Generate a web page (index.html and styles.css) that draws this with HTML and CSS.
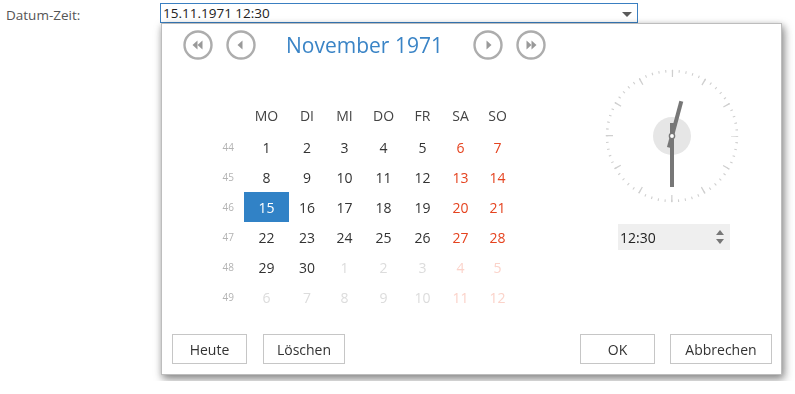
FILE: index.html
```html
<!DOCTYPE html>
<html lang="de">
<head>
    <meta charset="UTF-8">
    <meta name="viewport" content="width=device-width, initial-scale=1.0">
    <title>Datum-Zeit</title>
    <link rel="stylesheet" href="styles.css">
</head>
<body>
    <div class="form-row">
        <label class="form-label">Datum-Zeit:</label>
        <div class="picker">
            <div class="picker-input">
                <span>15.11.1971 12:30</span>
                <span class="dropdown-arrow"></span>
            </div>

            <div class="popup-wrap">
            <div class="popup">
                <div class="nav">
                    <button class="nav-btn" title="Voriges Jahr">
                        <svg width="30" height="30" viewBox="0 0 30 30">
                            <circle cx="15" cy="15" r="13.5" fill="none" stroke="#adadad" stroke-width="2.4"/>
                            <polygon points="14.5,10.5 9.5,15 14.5,19.5" fill="#999"/>
                            <polygon points="19.5,10.5 14.5,15 19.5,19.5" fill="#999"/>
                        </svg>
                    </button>
                    <button class="nav-btn" title="Voriger Monat">
                        <svg width="30" height="30" viewBox="0 0 30 30">
                            <circle cx="15" cy="15" r="13.5" fill="none" stroke="#adadad" stroke-width="2.4"/>
                            <polygon points="16.5,10.5 11.5,15 16.5,19.5" fill="#999"/>
                        </svg>
                    </button>
                    <div class="nav-title">November 1971</div>
                    <button class="nav-btn" title="Nächster Monat">
                        <svg width="30" height="30" viewBox="0 0 30 30">
                            <circle cx="15" cy="15" r="13.5" fill="none" stroke="#adadad" stroke-width="2.4"/>
                            <polygon points="13.5,10.5 18.5,15 13.5,19.5" fill="#999"/>
                        </svg>
                    </button>
                    <button class="nav-btn" title="Nächstes Jahr">
                        <svg width="30" height="30" viewBox="0 0 30 30">
                            <circle cx="15" cy="15" r="13.5" fill="none" stroke="#adadad" stroke-width="2.4"/>
                            <polygon points="10.5,10.5 15.5,15 10.5,19.5" fill="#999"/>
                            <polygon points="15.5,10.5 20.5,15 15.5,19.5" fill="#999"/>
                        </svg>
                    </button>
                </div>

                <div class="main">
                    <div class="calendar">
                        <div class="cal-head">
                            <span></span>
                            <span>MO</span><span>DI</span><span>MI</span><span>DO</span><span>FR</span><span>SA</span><span>SO</span>
                        </div>
                        <div class="cal-body">
                            <span class="wk">44</span>
                            <span>1</span><span>2</span><span>3</span><span>4</span><span>5</span><span class="we">6</span><span class="we">7</span>
                            <span class="wk">45</span>
                            <span>8</span><span>9</span><span>10</span><span>11</span><span>12</span><span class="we">13</span><span class="we">14</span>
                            <span class="wk">46</span>
                            <span class="sel">15</span><span>16</span><span>17</span><span>18</span><span>19</span><span class="we">20</span><span class="we">21</span>
                            <span class="wk">47</span>
                            <span>22</span><span>23</span><span>24</span><span>25</span><span>26</span><span class="we">27</span><span class="we">28</span>
                            <span class="wk">48</span>
                            <span>29</span><span>30</span><span class="out">1</span><span class="out">2</span><span class="out">3</span><span class="out we">4</span><span class="out we">5</span>
                            <span class="wk">49</span>
                            <span class="out">6</span><span class="out">7</span><span class="out">8</span><span class="out">9</span><span class="out">10</span><span class="out we">11</span><span class="out we">12</span>
                        </div>
                    </div>

                    <div class="time-side">
                        <svg class="clock" width="140" height="140" viewBox="0 0 140 140">
                            <!-- Minutenstriche und Stundenstriche -->
                            <circle cx="70" cy="70" r="65" fill="none" stroke="#cfcfcf" stroke-width="2.6"
                                    stroke-dasharray="1.1 5.7068" stroke-dashoffset="0.55"/>
                            <circle cx="70" cy="70" r="62.5" fill="none" stroke="#cfcfcf" stroke-width="7"
                                    stroke-dasharray="1.3 31.425" stroke-dashoffset="0.65"/>
                            <circle cx="70" cy="70" r="19" fill="#e6e6e6"/>
                            <line x1="66.9" y1="81.6" x2="79.3" y2="35.2" stroke="#777" stroke-width="4"/>
                            <line x1="70" y1="57" x2="70" y2="121" stroke="#777" stroke-width="4"/>
                            <circle cx="70" cy="70" r="2.6" fill="#fff" stroke="#777" stroke-width="1.4"/>
                        </svg>
                        <div class="time-input">
                            <span>12:30</span>
                            <span class="spinner">
                                <span class="spin-up"></span>
                                <span class="spin-down"></span>
                            </span>
                        </div>
                    </div>
                </div>

                <div class="footer">
                    <button class="btn btn-heute">Heute</button>
                    <button class="btn btn-loeschen">Löschen</button>
                    <span class="spacer"></span>
                    <button class="btn btn-ok">OK</button>
                    <button class="btn btn-abbrechen">Abbrechen</button>
                </div>
            </div>
            </div>
        </div>
    </div>
</body>
</html>
```

FILE: styles.css
```css
body {
    font-family: "Open Sans", "Noto Sans", sans-serif;
    margin: 0;
    padding: 0;
    background-color: #fff;
    color: #333;
}
.form-row {
    display: flex;
    align-items: flex-start;
}
.form-label {
    width: 154px;
    padding-left: 6px;
    padding-top: 6px;
    font-size: 13.5px;
    color: #555;
}
.picker {
    display: flex;
    flex-direction: column;
    margin-top: 3px;
}
.picker-input {
    display: flex;
    align-items: center;
    justify-content: space-between;
    box-sizing: border-box;
    width: 478px;
    height: 20px;
    padding: 0 5px 0 2px;
    border: 1px solid #3a7fc1;
    font-size: 13.5px;
    color: #222;
}
.dropdown-arrow {
    width: 0;
    height: 0;
    margin-top: 2px;
    border-left: 5px solid transparent;
    border-right: 5px solid transparent;
    border-top: 5px solid #5a5a5a;
}

/* Popup, mit Platz fuer den Schatten */
.popup-wrap {
    margin-left: 1px;
    width: 625px;
    padding: 0 4px 6px 0;
}
.popup {
    box-sizing: border-box;
    width: 621px;
    height: 352px;
    display: flex;
    flex-direction: column;
    background-color: #fff;
    border: 1px solid #bdbdbd;
    box-shadow: 2px 4px 9px rgba(0, 0, 0, 0.35);
    filter: drop-shadow(1px 2px 3px rgba(0, 0, 0, 0.22));
}
.nav {
    display: flex;
    align-items: center;
    height: 30px;
    margin-top: 6px;
    padding-left: 21px;
}
.nav-btn {
    width: 30px;
    height: 30px;
    padding: 0;
    border: none;
    background: none;
}
.nav-btn svg {
    display: block;
}
.nav-btn + .nav-btn {
    margin-left: 13px;
}
.nav-title {
    width: 217px;
    text-align: center;
    font-size: 21px;
    color: #3a84c6;
}
.main {
    display: flex;
    margin-top: 6px;
}
.calendar {
    margin-left: 42px;
    padding-top: 34px;
}
.cal-head,
.cal-body {
    display: grid;
    grid-template-columns: 40px 45px 36px 39px 39px 39px 37px 37px;
    grid-auto-rows: 30px;
}
.cal-head {
    margin-bottom: 2px;
}
.cal-head span,
.cal-body span {
    display: flex;
    align-items: center;
    justify-content: center;
    font-size: 14px;
    color: #333;
}
.cal-head span {
    color: #444;
}
.cal-body .wk {
    justify-content: flex-end;
    padding-right: 10px;
    font-size: 10px;
    color: #b3b3b3;
}
.cal-body .we {
    color: #e5431f;
}
.cal-body .out {
    color: #dcdcdc;
}
.cal-body .out.we {
    color: #fbd3ca;
}
.cal-body .sel {
    background-color: #3182c6;
    color: #fff;
}
.time-side {
    margin-left: 86px;
    display: flex;
    flex-direction: column;
}
.clock {
    display: block;
}
.time-input {
    display: flex;
    align-items: center;
    justify-content: space-between;
    box-sizing: border-box;
    width: 112px;
    height: 26px;
    margin-top: 18px;
    margin-left: 16px;
    padding: 0 6px 0 2px;
    background-color: #efefef;
    font-size: 14px;
    color: #222;
}
.spinner {
    display: flex;
    flex-direction: column;
    gap: 4px;
}
.spin-up,
.spin-down {
    width: 0;
    height: 0;
    border-left: 4px solid transparent;
    border-right: 4px solid transparent;
}
.spin-up {
    border-bottom: 5px solid #777;
}
.spin-down {
    border-top: 5px solid #777;
}
.footer {
    display: flex;
    margin-top: auto;
    padding: 0 9px 10px 10px;
}
.spacer {
    flex: 1;
}
.btn {
    height: 30px;
    padding: 0;
    background-color: #fff;
    border: 1px solid #c6c6c6;
    font-family: "Open Sans", "Noto Sans", sans-serif;
    font-size: 14px;
    color: #333;
}
.btn-heute {
    width: 75px;
}
.btn-loeschen {
    width: 82px;
    margin-left: 16px;
}
.btn-ok {
    width: 75px;
}
.btn-abbrechen {
    width: 102px;
    margin-left: 15px;
}
```
